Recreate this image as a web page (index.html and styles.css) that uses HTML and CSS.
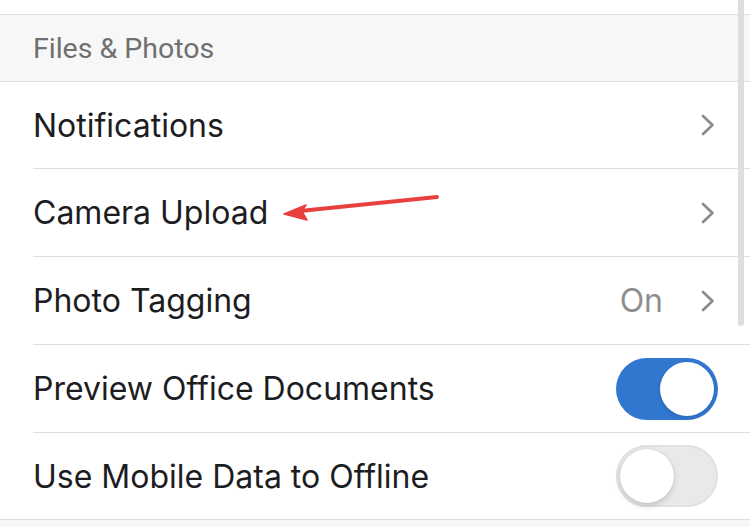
FILE: index.html
```html
<!DOCTYPE html>
<html>
<head>
<meta charset="utf-8">
<link rel="stylesheet" href="styles.css">
</head>
<body>
<div class="screen">
  <div class="top-gap"></div>
  <div class="section-header">Files &amp; Photos</div>
  <div class="list">
    <div class="row">
      <div class="row-inner">
        <span class="label">Notifications</span>
        <span class="accessory">
          <svg class="chev" width="14" height="22" viewBox="0 0 14 22"><path d="M2 2 L11.5 11 L2 20" fill="none" stroke="#8a8a8c" stroke-width="2.6" stroke-linecap="round" stroke-linejoin="round"/></svg>
        </span>
      </div>
    </div>
    <div class="row">
      <div class="row-inner">
        <span class="label">Camera Upload</span>
        <span class="accessory">
          <svg class="chev" width="14" height="22" viewBox="0 0 14 22"><path d="M2 2 L11.5 11 L2 20" fill="none" stroke="#8a8a8c" stroke-width="2.6" stroke-linecap="round" stroke-linejoin="round"/></svg>
        </span>
      </div>
    </div>
    <div class="row">
      <div class="row-inner">
        <span class="label">Photo Tagging</span>
        <span class="accessory">
          <span class="value">On</span>
          <svg class="chev" width="14" height="22" viewBox="0 0 14 22"><path d="M2 2 L11.5 11 L2 20" fill="none" stroke="#8a8a8c" stroke-width="2.6" stroke-linecap="round" stroke-linejoin="round"/></svg>
        </span>
      </div>
    </div>
    <div class="row">
      <div class="row-inner">
        <span class="label">Preview Office Documents</span>
        <span class="accessory">
          <span class="switch on"><span class="knob"></span></span>
        </span>
      </div>
    </div>
    <div class="row last">
      <div class="row-inner">
        <span class="label">Use Mobile Data to Offline</span>
        <span class="accessory">
          <span class="switch off"><span class="knob"></span></span>
        </span>
      </div>
    </div>
  </div>
  <div class="bottom-gap"></div>
  <div class="scrollbar"></div>
  <svg class="annot-arrow" width="750" height="527" viewBox="0 0 750 527">
    <path d="M437 197 L300 211" stroke="#e8403f" stroke-width="4" stroke-linecap="round" fill="none"/>
    <path d="M284 214 L306 205 L302 211 L307 220 Z" fill="#e8403f" stroke="#e8403f" stroke-width="1.5" stroke-linejoin="round"/>
  </svg>
</div>
</body>
</html>
```

FILE: styles.css
```css
* { box-sizing: border-box; }
html, body { margin: 0; padding: 0; background: #ffffff; }
.screen {
  position: relative;
  width: 750px;
  height: 527px;
  overflow: hidden;
  font-family: Inter, "Noto Sans", sans-serif;
  background: #ffffff;
}
.top-gap {
  height: 15px;
  border-bottom: 1px solid #dddddd;
}
.section-header {
  height: 67px;
  background: #f7f7f7;
  border-bottom: 1px solid #dddddd;
  padding-left: 33px;
  display: flex;
  align-items: center;
  font-family: Roboto, Inter, sans-serif;
  font-size: 28.5px;
  color: #6f6f6f;
  padding-bottom: 0px;
}
.row {
  padding-left: 33px;
}
.row-inner {
  height: 88px;
  border-bottom: 1px solid #dedede;
  display: flex;
  align-items: center;
  justify-content: space-between;
  padding-right: 35px;
}
.row:first-child .row-inner { height: 87px; }
.row.last { padding-left: 0; }
.row.last .row-inner { padding-left: 33px; height: 87px; }
.label {
  font-size: 32px;
  color: #1d1d1f;
}
.accessory {
  display: flex;
  align-items: center;
}
.value {
  font-size: 32px;
  color: #8e8e90;
  margin-right: 38px;
}
.chev { display: block; }
.switch {
  position: relative;
  width: 102px;
  height: 62px;
  border-radius: 31px;
  margin-right: -3px;
  display: block;
}
.switch.on { background: #3177d0; }
.switch.off {
  background: #e9e9ea;
  box-shadow: inset 0 0 0 2px #e2e2e2;
}
.knob {
  position: absolute;
  top: 4px;
  width: 54px;
  height: 54px;
  border-radius: 50%;
  background: #ffffff;
}
.switch.on .knob { right: 4px; box-shadow: 0 2px 4px rgba(0,0,0,0.12); }
.switch.off .knob { left: 4px; box-shadow: 0 3px 6px rgba(0,0,0,0.15), 0 0 1px rgba(0,0,0,0.2); }
.bottom-gap {
  height: 20px;
  background: #f7f7f7;
}
.scrollbar {
  position: absolute;
  left: 738px;
  top: -6px;
  width: 6px;
  height: 332px;
  border-radius: 3px;
  background: #dedede;
}
.annot-arrow {
  position: absolute;
  left: 0;
  top: 0;
  pointer-events: none;
}
```
